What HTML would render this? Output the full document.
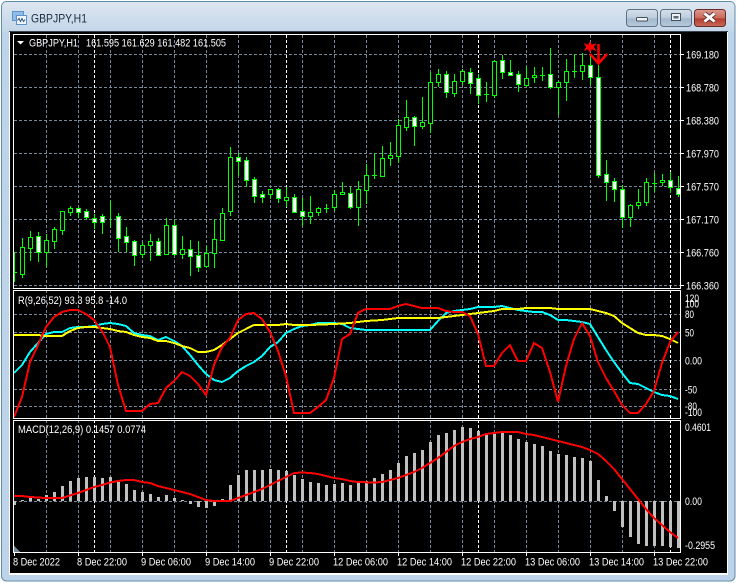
<!DOCTYPE html>
<html><head><meta charset="utf-8"><title>GBPJPY,H1</title>
<style>html,body{margin:0;padding:0;background:#fff;width:738px;height:583px;overflow:hidden}svg{display:block}text{font-family:"Liberation Sans",sans-serif;font-size:11px;fill:#fff}</style></head>
<body>
<svg width="738" height="583" viewBox="0 0 738 583" xmlns="http://www.w3.org/2000/svg">
<defs>
<linearGradient id="tb" x1="0" y1="0" x2="0" y2="1"><stop offset="0" stop-color="#dde6f0"/><stop offset="1" stop-color="#c3d6e9"/></linearGradient>
<linearGradient id="btn" x1="0" y1="0" x2="0" y2="1"><stop offset="0" stop-color="#d6e0eb"/><stop offset=".5" stop-color="#bccbdb"/><stop offset=".55" stop-color="#a3b8ce"/><stop offset="1" stop-color="#b7cadd"/></linearGradient>
<linearGradient id="cls" x1="0" y1="0" x2="0" y2="1"><stop offset="0" stop-color="#dc9a90"/><stop offset=".5" stop-color="#c8685c"/><stop offset=".55" stop-color="#b23c2e"/><stop offset="1" stop-color="#c96a5c"/></linearGradient>
<clipPath id="c1"><rect x="14" y="35" width="666" height="253"/></clipPath>
<clipPath id="c2"><rect x="14" y="291" width="666" height="127"/></clipPath>
<clipPath id="c3"><rect x="14" y="421" width="666" height="131"/></clipPath>
</defs>
<rect x="1.5" y="1.5" width="733.5" height="579.5" rx="5" fill="#bcd3ea" stroke="#5f8ea8"/>
<path d="M2 32V7Q2 2 7 2H730Q734.500 2 734.500 7V32Z" fill="url(#tb)"/>
<rect x="9" y="31" width="719" height="544" fill="#fff"/>
<rect x="9" y="31" width="719" height="1" fill="#39424c"/>
<rect x="10" y="32" width="717" height="541" fill="#000"/>

<!-- title icon -->
<rect x="12.500" y="11.500" width="11" height="9" fill="#8fbde6" stroke="#5d93c9"/>
<rect x="16.500" y="15.500" width="10" height="9" fill="#f2f7fc" stroke="#5d93c9"/>
<path d="M17.500 20.500l1.500-2 1.500 3 1.500-3 1.500 3 1.500-2" fill="none" stroke="#33557a"/>
<text x="31" y="22.500" textLength="56" lengthAdjust="spacingAndGlyphs" style="font-size:12px;fill:#1c2b3a">GBPJPY,H1</text>

<!-- buttons -->
<rect x="626.500" y="9.500" width="31" height="17" rx="3" fill="url(#btn)" stroke="#5f7283"/>
<rect x="636.500" y="17.500" width="11" height="3.500" rx="1" fill="#f2f5f8" stroke="#44525f"/>
<rect x="660.500" y="9.500" width="31" height="17" rx="3" fill="url(#btn)" stroke="#5f7283"/>
<rect x="671.500" y="13.500" width="9" height="7" fill="#eef2f6" stroke="#44525f"/><rect x="673.500" y="16" width="5" height="2.500" fill="#5a6a7a"/>
<rect x="694.500" y="9.500" width="31" height="17" rx="3" fill="url(#cls)" stroke="#6a2a26"/>
<path d="M704.500 13.500l10 8M714.500 13.500l-10 8" stroke="#4a2a28" stroke-width="4.500" fill="none"/>
<path d="M704.500 13.500l10 8M714.500 13.500l-10 8" stroke="#fff" stroke-width="2.800" fill="none"/>

<!-- grids -->
<g fill="none" stroke="#778899" stroke-dasharray="3 2" shape-rendering="crispEdges">
<path d="M14 54.500H680M14 87.500H680M14 120.500H680M14 153.500H680M14 186.500H680M14 219.500H680M14 252.500H680M14 285.500H680"/>
<path d="M14 314.500H680M14 332.500H680M14 360.500H680M14 389.500H680M14 406.500H680"/>
<path d="M14 501.500H680"/>
<path d="M46.500 35V552M78.500 35V552M110.500 35V552M142.500 35V552M174.500 35V552M206.500 35V552M238.500 35V552M270.500 35V552M302.500 35V552M334.500 35V552M366.500 35V552M398.500 35V552M430.500 35V552M462.500 35V552M494.500 35V552M526.500 35V552M558.500 35V552M590.500 35V552M622.500 35V552M654.500 35V552"/>
</g>
<g fill="none" stroke="#fff" stroke-dasharray="3 2" shape-rendering="crispEdges">
<path d="M94.500 35V552M286.500 35V552M478.500 35V552M670.500 35V552"/>
</g>
<rect x="14" y="288" width="667" height="3" fill="#000"/><rect x="14" y="418" width="667" height="3" fill="#000"/>

<!-- candles -->
<g clip-path="url(#c1)" shape-rendering="crispEdges">
<path fill="none" stroke="#0f0" d="M14.500 252V282M22.500 238V278M30.500 231V261M38.500 232V262M46.500 234V267M54.500 227V249M62.500 211V235M70.500 206V216M78.500 207V218M86.500 209V220M94.500 214V229M102.500 214V234M110.500 201V228M118.500 213V252M126.500 227V252M134.500 240V266M142.500 242V258M150.500 234V261M158.500 238V256M166.500 218V255M174.500 220V256M182.500 236V259M190.500 240V276M198.500 241V272M206.500 246V267M214.500 219V268M222.500 208V240M230.500 147V216M238.500 153V176M246.500 157V187M254.500 177V203M262.500 191V203M270.500 189V199M278.500 188V203M286.500 187V207M294.500 194V213M302.500 198V226M310.500 196V224M318.500 207V216M326.500 204V213M334.500 190V211M342.500 182V195M350.500 187V209M358.500 181V226M366.500 164V204M374.500 153V179M382.500 146V177M390.500 142V166M398.500 119V163M406.500 100V131M414.500 116V146M422.500 97V129M430.500 72V133M438.500 69V87M446.500 71V98M454.500 74V97M462.500 69V85M470.500 68V94M478.500 74V104M486.500 82V102M494.500 60V98M502.500 55V79M510.500 60V76M518.500 71V92M526.500 67V87M534.500 67V83M542.500 67V81M550.500 48V89M558.500 81V115M566.500 59V101M574.500 54V78M582.500 53V80M590.500 55V85M598.500 65V178M606.500 160V201M614.500 178V202M622.500 185V228M630.500 204V227M638.500 189V209M646.500 178V206M654.500 173V192M662.500 174V186M670.500 172V193M678.500 176V197"/>
<path fill="none" stroke="#0f0" d="M12 272.500H17M324 208.500H329M372 175.500H377M484 94.500H489M540 75.500H545M572 71.500H577M652 183.500H657"/>
<path fill="#000" stroke="#0f0" d="M20.500 247.500h4v27h-4zM28.500 237.500h4v11h-4zM44.500 240.500h4v12h-4zM52.500 229.500h4v12h-4zM60.500 211.500h4v19h-4zM68.500 208.500h4v4h-4zM140.500 245.500h4v9h-4zM148.500 241.500h4v4h-4zM164.500 225.500h4v29h-4zM180.500 249.500h4v5h-4zM204.500 253.500h4v13h-4zM212.500 239.500h4v14h-4zM220.500 213.500h4v27h-4zM228.500 157.500h4v54h-4zM268.500 189.500h4v5h-4zM284.500 197.500h4v3h-4zM308.500 212.500h4v4h-4zM316.500 208.500h4v4h-4zM332.500 194.500h4v13h-4zM340.500 192.500h4v2h-4zM356.500 189.500h4v18h-4zM364.500 175.500h4v15h-4zM380.500 158.500h4v18h-4zM388.500 155.500h4v3h-4zM396.500 125.500h4v31h-4zM404.500 117.500h4v10h-4zM420.500 122.500h4v4h-4zM428.500 82.500h4v41h-4zM436.500 74.500h4v8h-4zM452.500 81.500h4v12h-4zM460.500 71.500h4v10h-4zM492.500 61.500h4v34h-4zM524.500 78.500h4v7h-4zM532.500 75.500h4v2h-4zM556.500 82.500h4v5h-4zM564.500 71.500h4v11h-4zM580.500 65.500h4v6h-4zM628.500 205.500h4v12h-4zM636.500 202.500h4v3h-4zM644.500 182.500h4v20h-4zM660.500 180.500h4v2h-4z"/>
<path fill="#fff" stroke="#0f0" d="M36.500 236.500h4v16h-4zM76.500 208.500h4v4h-4zM84.500 211.500h4v6h-4zM92.500 218.500h4v4h-4zM100.500 216.500h4v6h-4zM116.500 216.500h4v22h-4zM124.500 236.500h4v6h-4zM132.500 241.500h4v14h-4zM156.500 241.500h4v14h-4zM172.500 225.500h4v29h-4zM188.500 249.500h4v7h-4zM196.500 255.500h4v12h-4zM236.500 157.500h4v4h-4zM244.500 160.500h4v20h-4zM252.500 179.500h4v17h-4zM260.500 194.500h4v3h-4zM276.500 189.500h4v9h-4zM292.500 197.500h4v15h-4zM300.500 211.500h4v5h-4zM348.500 193.500h4v14h-4zM412.500 117.500h4v9h-4zM444.500 74.500h4v18h-4zM468.500 72.500h4v11h-4zM476.500 78.500h4v17h-4zM500.500 60.500h4v12h-4zM508.500 72.500h4v3h-4zM516.500 74.500h4v10h-4zM548.500 74.500h4v13h-4zM588.500 65.500h4v12h-4zM596.500 77.500h4v98h-4zM604.500 174.500h4v8h-4zM612.500 181.500h4v8h-4zM620.500 189.500h4v28h-4zM668.500 180.500h4v7h-4zM676.500 188.500h4v6h-4z"/>
</g>

<!-- star + arrow -->
<polygon points="590,41 591.800,44.700 596.500,43 593.800,47 596.500,51 591.800,49.300 590,53 588.200,49.300 583.500,51 586.200,47 583.500,43 588.200,44.700" fill="#f00"/>
<path d="M598.500 44V63M590 54L598.500 63.500L607 54" fill="none" stroke="#f00" stroke-width="2.500"/>

<!-- RSI -->
<g clip-path="url(#c2)" fill="none" stroke-width="2" shape-rendering="crispEdges">
<polyline stroke="#0ff" points="14,373 22,365 30,352 38,343 46,334 54,332 62,332 70,328 78,327 86,327 94,326 102,324 110,323 118,324 126,326 134,333 142,335 150,336 158,340 166,337 174,341 182,346 190,355 198,365 206,374 214,380 222,382 230,378 238,371 246,366 254,362 262,356 270,347 278,342 286,333 294,329 302,326 310,325 318,323 326,323 334,323 342,324 350,328 358,329 366,330 430,330 438,321 446,313 454,311 462,310 470,309 478,307 486,307 494,307 502,306 510,308 518,310 526,311 534,312 542,312 550,315 558,320 566,320 574,321 582,322 590,324 598,337 606,350 614,362 622,373 630,383 638,384 646,388 654,392 662,395 670,396 678,399"/>
<polyline stroke="#ff0" points="14,335 38,335 46,336 62,336 70,331 78,328 86,327 94,327 102,328 110,329 118,331 126,332 134,335 142,337 150,338 158,341 166,341 174,343 182,346 190,348 198,352 206,352 214,350 222,345 230,339 238,333 246,329 254,325 278,325 286,324 294,325 310,325 334,324 350,323 358,322 366,321 382,320 390,319 398,318 438,318 446,317 462,315 478,313 494,311 502,309 518,309 526,308 550,308 558,309 590,309 598,311 606,313 614,316 622,323 630,328 638,333 646,335 654,335 662,336 670,339 678,343"/>
<polyline stroke="#f00" points="14,417 22,397 30,362 38,345 46,327 54,317 62,312 70,310 78,310 86,314 94,320 102,331 110,347 118,385 126,411 142,411 150,404 158,403 166,388 174,381 182,372 190,376 198,384 206,395 214,365 222,347 230,338 238,320 246,314 254,313 262,319 270,332 278,351 286,376 294,413 310,413 318,407 326,400 334,378 342,339 350,334 358,313 366,309 390,309 398,306 406,304 414,306 422,308 438,308 446,311 454,312 462,312 470,316 478,334 486,366 494,366 502,353 510,345 518,361 526,361 534,343 542,348 550,372 558,402 566,366 574,339 582,323 590,336 598,362 606,378 614,391 622,405 630,413 638,413 646,404 654,391 662,363 670,342 678,332"/>
</g>

<!-- MACD -->
<g clip-path="url(#c3)" shape-rendering="crispEdges">
<path fill="none" stroke="#c0c0c0" stroke-width="3" d="M14.500 501V505M22.500 501V500M30.500 501V498M38.500 501V499M46.500 501V495M54.500 501V492M62.500 501V486M70.500 501V481M78.500 501V478M86.500 501V477M94.500 501V477M102.500 501V478M110.500 501V477M118.500 501V482M126.500 501V484M134.500 501V490M142.500 501V492M150.500 501V494M158.500 501V497M166.500 501V495M174.500 501V498M182.500 501V500M190.500 501V504M198.500 501V507M206.500 501V508M214.500 501V506M222.500 501V499M230.500 501V485M238.500 501V475M246.500 501V470M254.500 501V470M262.500 501V470M270.500 501V469M278.500 501V470M286.500 501V471M294.500 501V475M302.500 501V479M310.500 501V482M318.500 501V483M326.500 501V485M334.500 501V484M342.500 501V483M350.500 501V485M358.500 501V483M366.500 501V481M374.500 501V478M382.500 501V474M390.500 501V470M398.500 501V463M406.500 501V456M414.500 501V453M422.500 501V450M430.500 501V442M438.500 501V435M446.500 501V433M454.500 501V430M462.500 501V427M470.500 501V428M478.500 501V431M486.500 501V433M494.500 501V433M502.500 501V433M510.500 501V435M518.500 501V439M526.500 501V442M534.500 501V444M542.500 501V446M550.500 501V451M558.500 501V454M566.500 501V455M574.500 501V457M582.500 501V458M590.500 501V461M598.500 501V480M606.500 501V496M614.500 501V511M622.500 501V527M630.500 501V537M638.500 501V544M646.500 501V546M654.500 501V546M662.500 501V546M670.500 501V547M678.500 501V548"/>
<polyline fill="none" stroke="#f00" stroke-width="2" points="14,496 22,496 30,497 46,498 62,498 70,495.500 78,493 86,490 94,487 102,485 110,482.500 118,481 126,480 134,480 142,482 150,483 158,486 166,488 174,490 182,492 190,494 198,497 206,500 214,501 230,501 238,498 246,495 254,492 262,489 270,485 278,481 286,477 294,473 302,472.500 310,473 318,474 326,476 334,478 342,479 350,481 358,482 374,482.500 382,482 390,480 398,478 406,475 414,472 422,468 430,463 438,458 446,452 454,446 462,442 470,439 478,437 486,434 494,433 502,432 518,432 526,434 534,435 542,437 550,439 558,441 566,443 574,445 582,447 590,450 598,454 606,461 614,469 622,479 630,489 638,499 646,509 654,518 662,525 670,532 678,538"/>
<polygon points="14,546 14,552 20,552" fill="#778899"/>
</g>

<!-- panel borders -->
<path fill="none" stroke="#fff" shape-rendering="crispEdges" d="M13.500 34.500H680.500V288.500H13.500ZM13.500 290.500H680.500V418.500H13.500ZM13.500 420.500H680.500V552.500H13.500Z"/>
<path fill="none" stroke="#fff" shape-rendering="crispEdges" d="M681 54.500h3M681 87.500h3M681 120.500h3M681 153.500h3M681 186.500h3M681 219.500h3M681 252.500h3M681 285.500h3M14.500 553v3M78.500 553v3M142.500 553v3M206.500 553v3M270.500 553v3M334.500 553v3M398.500 553v3M462.500 553v3M526.500 553v3M590.500 553v3M654.500 553v3"/>

<!-- labels -->
<polygon points="17,41 24,41 20.500,44.500" fill="#fff"/>
<text x="29" y="46.500" textLength="49" lengthAdjust="spacingAndGlyphs">GBPJPY,H1</text>
<text x="86" y="46.500" textLength="140" lengthAdjust="spacingAndGlyphs">161.595 161.629 161.482 161.505</text>
<text x="18" y="304" textLength="109" lengthAdjust="spacingAndGlyphs">R(9,26,52) 93.3 95.8 -14.0</text>
<text x="18" y="433" textLength="128" lengthAdjust="spacingAndGlyphs">MACD(12,26,9) 0.1457 0.0774</text>

<text x="686" y="58.500" textLength="33" lengthAdjust="spacingAndGlyphs">169.180</text>
<text x="686" y="91.500" textLength="33" lengthAdjust="spacingAndGlyphs">168.780</text>
<text x="686" y="124.500" textLength="33" lengthAdjust="spacingAndGlyphs">168.380</text>
<text x="686" y="157.500" textLength="33" lengthAdjust="spacingAndGlyphs">167.970</text>
<text x="686" y="190.500" textLength="33" lengthAdjust="spacingAndGlyphs">167.570</text>
<text x="686" y="223.500" textLength="33" lengthAdjust="spacingAndGlyphs">167.170</text>
<text x="686" y="256.500" textLength="33" lengthAdjust="spacingAndGlyphs">166.760</text>
<text x="686" y="289.500" textLength="33" lengthAdjust="spacingAndGlyphs">166.360</text>

<text x="685" y="302" textLength="14" lengthAdjust="spacingAndGlyphs">120</text>
<text x="685" y="307.500" textLength="14" lengthAdjust="spacingAndGlyphs">100</text>
<text x="685" y="318" textLength="9" lengthAdjust="spacingAndGlyphs">80</text>
<text x="685" y="336.500" textLength="9" lengthAdjust="spacingAndGlyphs">50</text>
<text x="685" y="364.500" textLength="17" lengthAdjust="spacingAndGlyphs">0.00</text>
<text x="685" y="393.500" textLength="12" lengthAdjust="spacingAndGlyphs">-50</text>
<text x="685" y="410" textLength="12" lengthAdjust="spacingAndGlyphs">-80</text>
<text x="685" y="416" textLength="17" lengthAdjust="spacingAndGlyphs">-100</text>

<text x="685" y="431" textLength="26" lengthAdjust="spacingAndGlyphs">0.4601</text>
<text x="685" y="505" textLength="17" lengthAdjust="spacingAndGlyphs">0.00</text>
<text x="685" y="549" textLength="30" lengthAdjust="spacingAndGlyphs">-0.2955</text>

<text x="13" y="565.500" textLength="47" lengthAdjust="spacingAndGlyphs">8 Dec 2022</text>
<text x="77" y="565.500" textLength="50" lengthAdjust="spacingAndGlyphs">8 Dec 22:00</text>
<text x="141" y="565.500" textLength="50" lengthAdjust="spacingAndGlyphs">9 Dec 06:00</text>
<text x="205" y="565.500" textLength="50" lengthAdjust="spacingAndGlyphs">9 Dec 14:00</text>
<text x="269" y="565.500" textLength="50" lengthAdjust="spacingAndGlyphs">9 Dec 22:00</text>
<text x="333" y="565.500" textLength="55" lengthAdjust="spacingAndGlyphs">12 Dec 06:00</text>
<text x="397" y="565.500" textLength="55" lengthAdjust="spacingAndGlyphs">12 Dec 14:00</text>
<text x="461" y="565.500" textLength="55" lengthAdjust="spacingAndGlyphs">12 Dec 22:00</text>
<text x="525" y="565.500" textLength="55" lengthAdjust="spacingAndGlyphs">13 Dec 06:00</text>
<text x="589" y="565.500" textLength="55" lengthAdjust="spacingAndGlyphs">13 Dec 14:00</text>
<text x="653" y="565.500" textLength="55" lengthAdjust="spacingAndGlyphs">13 Dec 22:00</text>
</svg>
</body></html>
